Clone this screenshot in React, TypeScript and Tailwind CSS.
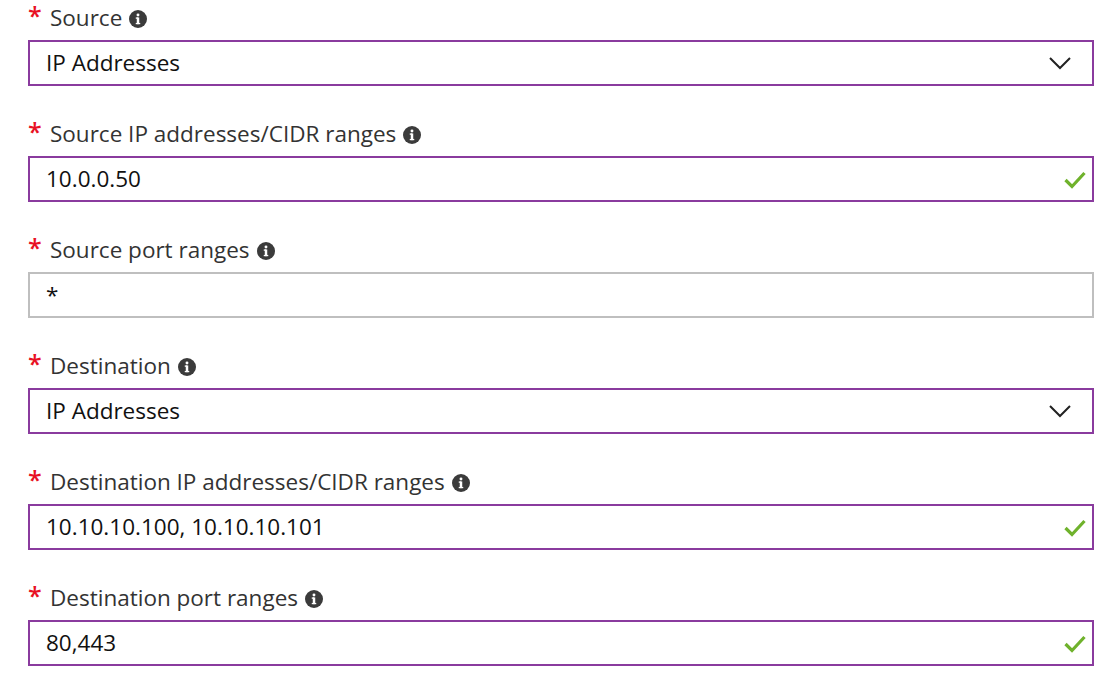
import React from "react";

type Field = {
  label: string;
  value: string;
  kind: "select" | "valid" | "plain";
};

const fields: Field[] = [
  { label: "Source", value: "IP Addresses", kind: "select" },
  { label: "Source IP addresses/CIDR ranges", value: "10.0.0.50", kind: "valid" },
  { label: "Source port ranges", value: "*", kind: "plain" },
  { label: "Destination", value: "IP Addresses", kind: "select" },
  { label: "Destination IP addresses/CIDR ranges", value: "10.10.10.100, 10.10.10.101", kind: "valid" },
  { label: "Destination port ranges", value: "80,443", kind: "valid" },
];

function InfoIcon() {
  return (
    <svg width="18" height="18" viewBox="0 0 16 16" className="ml-[7px] mt-[1px]">
      <circle cx="8" cy="8" r="8" fill="#3b3b3b" />
      <circle cx="8" cy="4.4" r="1.3" fill="#fff" />
      <rect x="6.9" y="6.6" width="2.2" height="6" fill="#fff" />
      <rect x="6" y="6.6" width="2" height="1.2" fill="#fff" />
      <rect x="6" y="11.5" width="4" height="1.1" fill="#fff" />
    </svg>
  );
}

function Chevron() {
  return (
    <svg width="24" height="14" viewBox="0 0 24 14" fill="none" className="mr-[14px]">
      <path d="M2 2 L12 12 L22 2" stroke="#222" strokeWidth="2" />
    </svg>
  );
}

function Check() {
  return (
    <svg width="22" height="18" viewBox="0 0 22 18" fill="none" className="mt-[2px]">
      <path d="M1.5 9 L8 15.5 L20.5 2" stroke="#6fb22c" strokeWidth="3.2" />
    </svg>
  );
}

export default function App() {
  return (
    <div
      className="w-[1118px] h-[688px] bg-white pl-[28px] pr-[24px] flex flex-col gap-[30px]"
      style={{ fontFamily: '"Open Sans", "Noto Sans", sans-serif' }}
    >
      {fields.map((f) => (
        <div key={f.label} className="flex flex-col">
          <div className="h-[36px] mb-[4px] flex items-center text-[22.5px] text-[#333]">
            <span className="text-[#e81123] text-[25px] font-semibold leading-[30px] w-[22px] self-start">*</span>
            <span>{f.label}</span>
            <InfoIcon />
          </div>
          <div
            className={
              "h-[46px] flex items-center justify-between pl-[16px] pr-[6px] border-2 bg-white " +
              (f.kind === "plain" ? "border-[#bfbfbf]" : "border-[#8a3b9e]")
            }
          >
            <span className="text-[22.5px] text-[#111]">{f.value}</span>
            {f.kind === "select" && <Chevron />}
            {f.kind === "valid" && <Check />}
          </div>
        </div>
      ))}
    </div>
  );
}
